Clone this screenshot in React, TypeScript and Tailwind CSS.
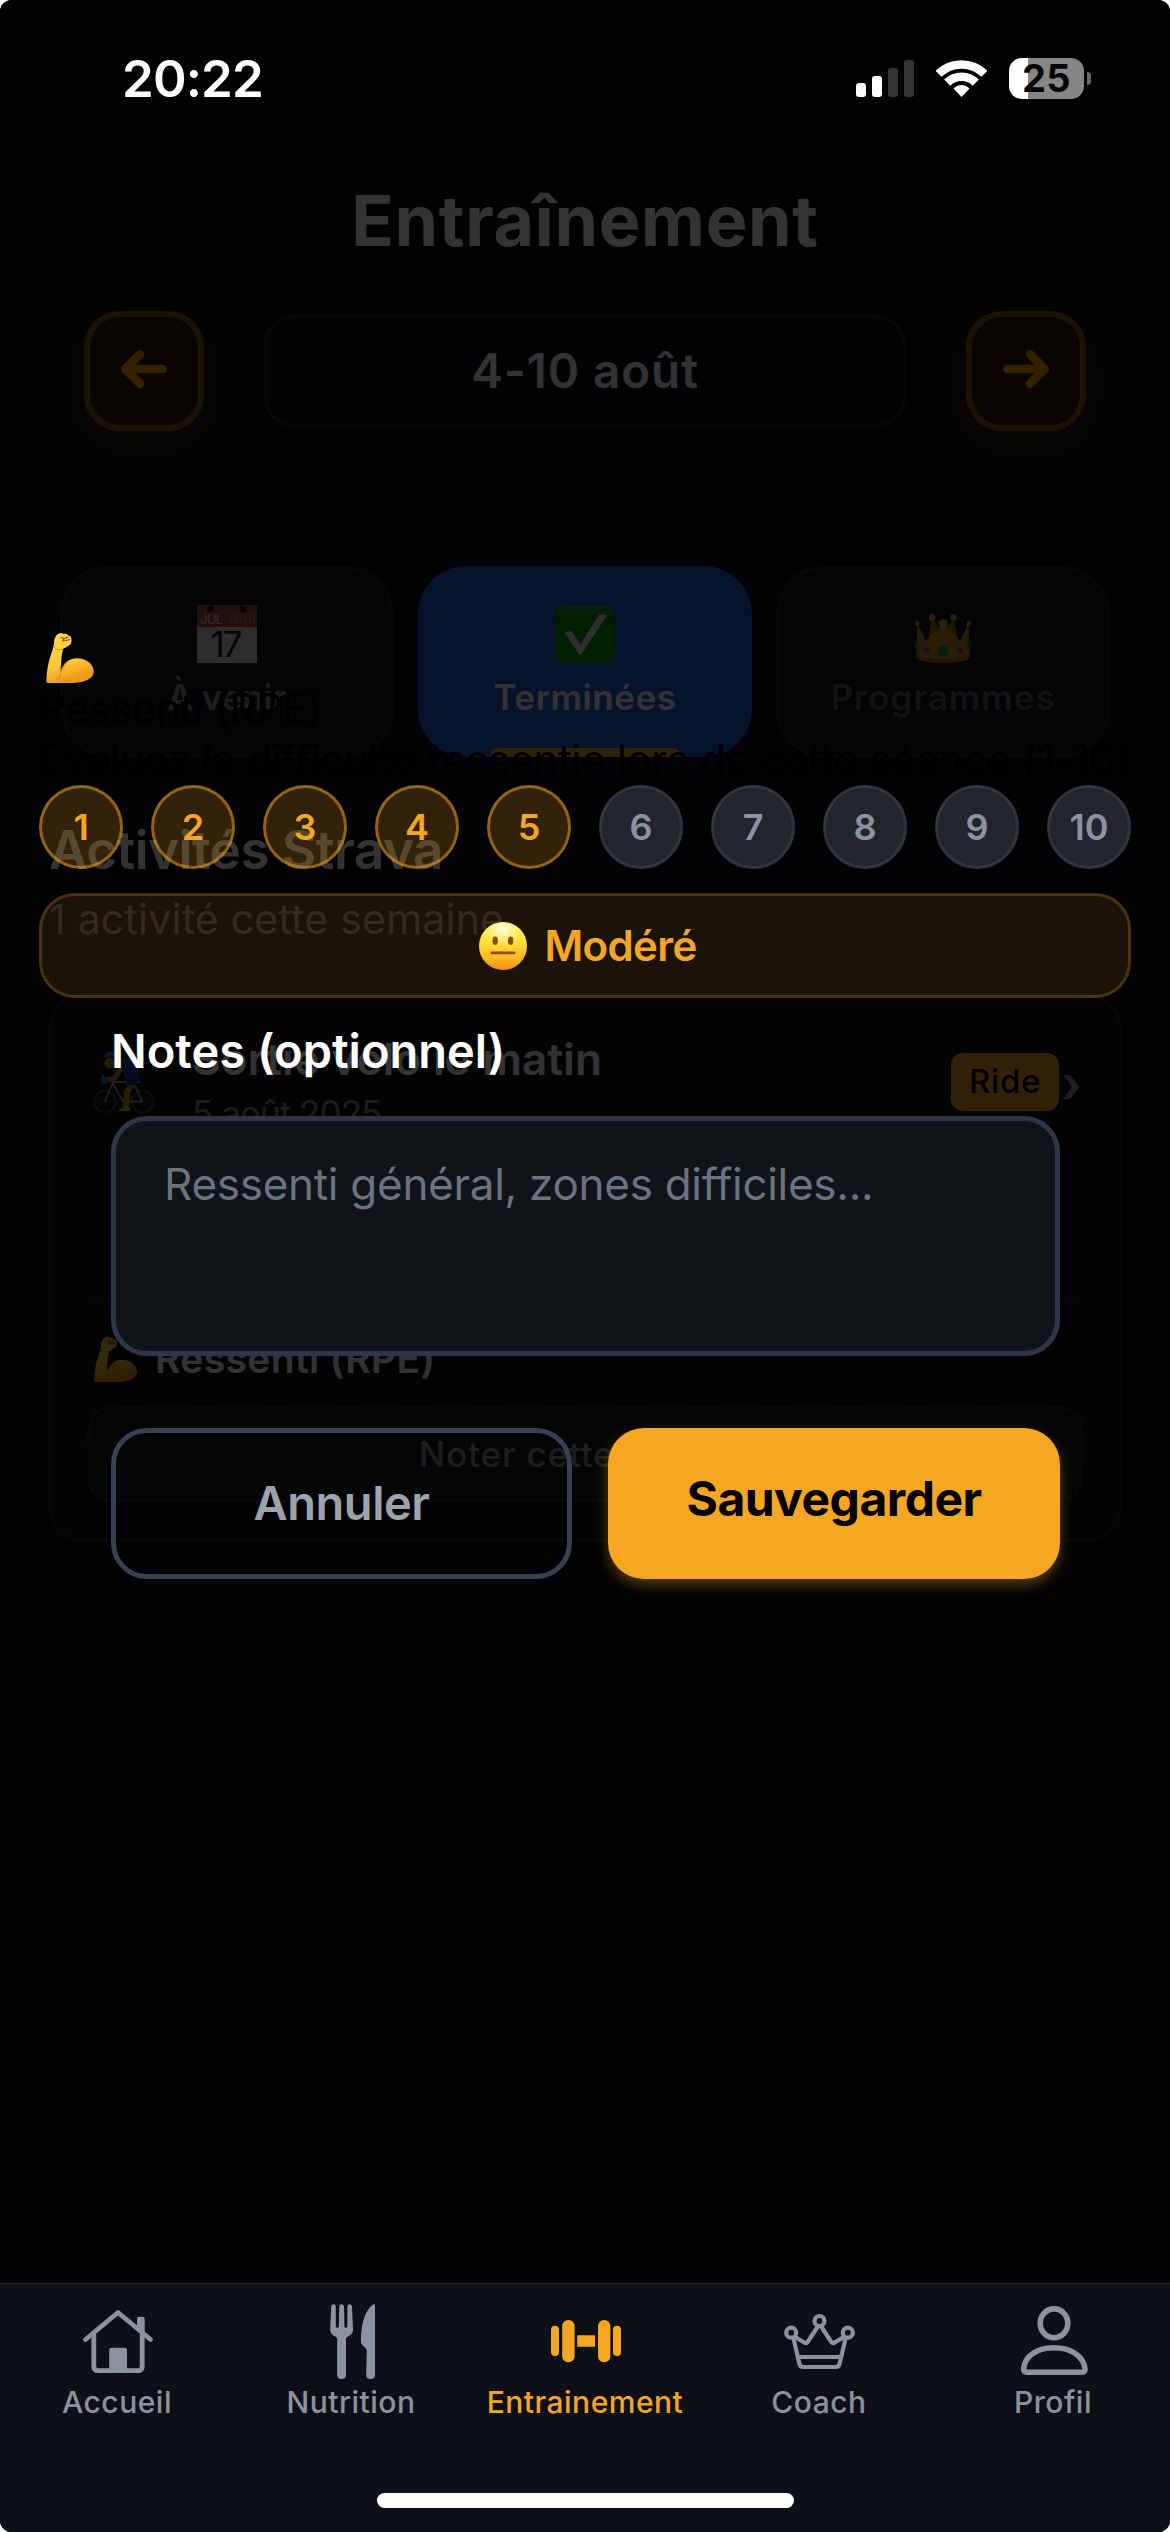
import type { ReactNode } from "react";

/* ---------- Emoji drawings ---------- */

function Biceps({ id, className }: { id: string; className: string }) {
  return (
    <svg viewBox="0 0 48 52" className={className} fill="none">
      <defs>
        <linearGradient id={id} x1="0" y1="0" x2="0.3" y2="1">
          <stop offset="0" stopColor="#ffd54e" />
          <stop offset="0.65" stopColor="#ffc938" />
          <stop offset="1" stopColor="#ee9a17" />
        </linearGradient>
      </defs>
      <path
        d="M8 12C8 6 10 3 13 1.6C14.500.6 16 .8 17 1.8L20 1.8L24.500 4.500C26 6 25.500 9 25 12C22 14 19 16 17 17L15.600 24L14.500 40L17 36C19 30 24 26.300 31 26.300C41 26.300 48 33 47.800 40C47 47.500 37 51 26 51H2C.8 51 .3 50 .4 48.500C.6 42 1.500 35 3 29C5 22 7 17 8 12Z"
        fill={`url(#${id})`}
      />
      <path d="M14.500 40C15 43 13.500 46 10.500 47.500M14.500 40C16 37 17.500 34 20 31" stroke="#e29413" strokeWidth="1.300" strokeLinecap="round" />
      <path d="M8 15C10 18 13 18.500 17 16.800" stroke="#e29413" strokeWidth="1" />
      <path d="M15 5.500L18.500 6.500L22 5M16.500 9L20 8.500L23.500 7.500M18 6.500L17 9" stroke="#8a4a0c" strokeWidth="1.100" strokeLinecap="round" />
    </svg>
  );
}

function NeutralFace() {
  return (
    <svg viewBox="0 0 48 48" className="h-12 w-12">
      <defs>
        <linearGradient id="face" x1="0" y1="0" x2="0" y2="1">
          <stop offset="0" stopColor="#fff26b" />
          <stop offset="0.45" stopColor="#fddf35" />
          <stop offset="0.8" stopColor="#fbb021" />
          <stop offset="1" stopColor="#f58a12" />
        </linearGradient>
        <radialGradient id="faceGlow" cx="0.5" cy="0.12" r="0.4">
          <stop offset="0" stopColor="#fffde0" stopOpacity="0.9" />
          <stop offset="1" stopColor="#fffde0" stopOpacity="0" />
        </radialGradient>
      </defs>
      <circle cx="24" cy="24" r="24" fill="url(#face)" />
      <circle cx="24" cy="24" r="23" fill="url(#faceGlow)" />
      <ellipse cx="16.2" cy="18.800" rx="2.700" ry="4.200" fill="#8a4b0b" />
      <ellipse cx="31.600" cy="18.800" rx="2.700" ry="4.200" fill="#8a4b0b" />
      <rect x="11.500" y="29.500" width="25" height="2.800" rx="1.200" fill="#8a4b0b" />
    </svg>
  );
}

function CalendarEmoji() {
  return (
    <svg viewBox="0 0 60 58" className="h-[58px] w-[60px]">
      <rect width="60" height="58" fill="#e2e2e2" />
      <rect width="60" height="22" fill="#b94a44" />
      <circle cx="13.500" cy="4.500" r="3.200" fill="#111" />
      <circle cx="46.500" cy="4.500" r="3.200" fill="#111" />
      <path d="M13.500 0V4M43 0L45 4" stroke="#111" strokeWidth="1.500" />
      <path d="M34 18l2-9M38.500 18l2-9M43 18l2-9M47.500 18l2-9M52 18l2-9M56 18l2-9" stroke="#d98a86" strokeWidth="1" />
      <text x="3" y="19" fontFamily="Inter, sans-serif" fontSize="13" fill="#e2e2e2" textLength="23">
        JUL
      </text>
      <text x="29.500" y="52" textAnchor="middle" fontFamily="Inter, sans-serif" fontSize="35" fill="#222" textLength="32">
        17
      </text>
    </svg>
  );
}

function CheckEmoji() {
  return (
    <svg viewBox="0 0 60 58" className="h-[58px] w-[60px]" fill="none">
      <defs>
        <linearGradient id="green" x1="0" y1="0" x2="0" y2="1">
          <stop offset="0" stopColor="#3b9a3b" />
          <stop offset="0.2" stopColor="#129012" />
          <stop offset="0.5" stopColor="#00a800" />
          <stop offset="1" stopColor="#009c00" />
        </linearGradient>
      </defs>
      <rect x=".8" y=".3" width="58.400" height="57.500" rx="9" fill="url(#green)" stroke="#087a08" strokeWidth="1" />
      <path d="M9.500 27.500L16.500 26L25.500 39.500L44 9.500H52.500L26 49.800H24.500Z" fill="#e8e8e8" />
    </svg>
  );
}

function CrownEmoji() {
  return (
    <svg viewBox="0 0 56 49" className="h-[49px] w-[56px]" fill="none">
      <path d="M13 28L17 3L27 20ZM43 28L38.500 3L29 20Z" fill="#a96a14" />
      <path d="M2.300 10L11 27C15 22 22 16 28 9.500C34 16 41 22 45 27L53.600 10L54.500 44C46 50.500 10 50.500 1.500 44Z" fill="#c9931d" />
      <path d="M1.500 40C10 46 46 46 54.500 40V44C46 50.500 10 50.500 1.500 44Z" fill="#b37a12" />
      <g fill="#d3a531">
        <ellipse cx="2.300" cy="9.500" rx="2.200" ry="2.800" />
        <ellipse cx="17.200" cy="3.500" rx="3.200" ry="3.500" />
        <circle cx="28.200" cy="9.500" r="4.600" />
        <ellipse cx="38.500" cy="3.500" rx="3.200" ry="3.500" />
        <ellipse cx="53.700" cy="9.500" rx="2.200" ry="2.800" />
      </g>
      <circle cx="28" cy="37" r="5.200" fill="#0f8f6c" />
      <circle cx="11.500" cy="36.200" r="2.900" fill="#9c2a86" />
      <circle cx="45" cy="36.200" r="2.900" fill="#9c2a86" />
      <ellipse cx="2.200" cy="32" rx="2" ry="5" fill="#0f8f6c" />
      <ellipse cx="53.800" cy="32" rx="2" ry="5" fill="#0f8f6c" />
    </svg>
  );
}

function CyclistEmoji() {
  return (
    <svg viewBox="0 0 62 62" className="h-[62px] w-[62px]" fill="none" strokeLinecap="round" strokeLinejoin="round">
      <g stroke="#4a4a4a" strokeWidth="1.600">
        <circle cx="12" cy="50.500" r="10.800" />
        <circle cx="49.500" cy="50.500" r="10.800" />
      </g>
      <path d="M12 40V61M1.500 50.500H22.500M4.500 43L19.500 58M19.500 43L4.500 58M49.500 40V61M39 50.500H60M42 43L57 58M57 43L42 58" stroke="#2c2c2c" strokeWidth=".8" />
      <path d="M12 50.500L20 31H46M20 33L31 52L41 33L49.500 50.500H31M10 25L9 30L14 31" stroke="#a8a8a8" strokeWidth="1.800" />
      <path d="M24 12L30 14L22 27L11 30" stroke="#c98f10" strokeWidth="5" />
      <path d="M39 33L34 41L33 56" stroke="#c98f10" strokeWidth="6" />
      <path d="M27 8C36 4 46 12 46.500 26C46 33 41 36 33 34C34 26 30 20 26 15Z" fill="#1b3fa0" />
      <path d="M26 58L35 55L38 58L36 60H26Z" fill="#b8c71b" />
      <circle cx="17" cy="12" r="5.500" fill="#c98f10" />
      <path d="M22 9C24 13 23 16 20 18" stroke="#3a2408" strokeWidth="3" />
      <path d="M10.500 7C12-1 22-2 25 6C20 5 15 6 10.500 7Z" fill="#1d86c4" />
      <circle cx="11.500" cy="29" r="3.500" fill="#1d86c4" />
    </svg>
  );
}

/* ---------- Tab bar icons ---------- */

const iconClass = "h-[78px] w-[100px]";

function HomeIcon() {
  return (
    <svg viewBox="0 0 100 78" className={iconClass} fill="none" stroke="currentColor" strokeWidth="4.800" strokeLinecap="round" strokeLinejoin="round">
      <path d="M18.500 37.500L51 10.500L83.500 37.500" />
      <path d="M26.800 32V64.500Q26.800 68.700 31 68.700H71Q75.200 68.700 75.200 64.500V32" />
      <path d="M70 27V17Q70 14.700 72.200 14.700H75.500Q77.700 14.700 77.700 17V33Z" fill="currentColor" stroke="none" />
      <path d="M42.200 69V48.200Q42.200 45.700 44.700 45.700H57.500Q60 45.700 60 48.200V69Z" fill="currentColor" stroke="none" />
    </svg>
  );
}

function CutleryIcon() {
  return (
    <svg viewBox="0 0 100 78" className={iconClass} fill="currentColor">
      <path d="M30.200 4.500Q30.300 2.200 32.600 2.200Q34.800 2.200 34.800 4.500V24.500Q34.900 25.800 36.300 25.800Q37.700 25.800 37.800 24.500L38.200 4.500Q38.400 2.200 40.600 2.200Q42.800 2.200 43 4.500L43.400 24.500Q43.500 25.800 44.900 25.800Q46.300 25.800 46.400 24.500V4.500Q46.500 2.200 48.700 2.200Q50.900 2.200 51 4.500L52 27C52 32 49 33.500 46.500 34.700Q45 35.500 45 37V73Q45 77 40.600 77Q36.200 77 36.200 73V37Q36.200 35.500 34.700 34.700C32 33.500 29.200 32 29.200 27Z" />
      <path d="M74 3.500V73Q74 77 69.600 77Q65.200 77 65.200 73L65.800 49Q65.800 47.500 64.500 46L60.800 42.500Q59.800 41.300 59.900 39C60 22 64 8 72 2.500Q74 1.500 74 3.500Z" />
    </svg>
  );
}

function DumbbellIcon() {
  return (
    <svg viewBox="0 0 100 78" className={iconClass} fill="currentColor">
      <rect x="16" y="23.700" width="8" height="30.300" rx="4" />
      <rect x="27.200" y="18" width="12.400" height="42.300" rx="6" />
      <rect x="42.200" y="33.300" width="17.800" height="11.500" rx=".6" />
      <rect x="63" y="18" width="12.400" height="42.300" rx="6" />
      <rect x="78" y="23.700" width="8" height="30.300" rx="4" />
    </svg>
  );
}

function CrownIcon() {
  return (
    <svg viewBox="0 0 100 78" className={iconClass} fill="none" stroke="currentColor" strokeWidth="4.200" strokeLinecap="round" strokeLinejoin="round">
      <circle cx="50.500" cy="19" r="5" />
      <circle cx="22.200" cy="30.700" r="5" />
      <circle cx="78.800" cy="30.700" r="5" />
      <path d="M24.500 36.500L30.300 61.500Q31 65 34.500 65H66.500Q70 65 70.700 61.500L76.500 36.500" />
      <path d="M27 35.500L35.800 40.800Q37.500 41.600 38.600 40L48.500 25M52.500 25L62.400 40Q63.500 41.600 65.200 40.800L74 35.500" />
      <path d="M29.500 55H71.500" strokeLinecap="butt" />
    </svg>
  );
}

function PersonIcon() {
  return (
    <svg viewBox="0 0 100 78" className={iconClass} fill="none" stroke="currentColor" strokeWidth="5.600" strokeLinejoin="round">
      <ellipse cx="51" cy="21.300" rx="13.800" ry="14.400" />
      <path d="M20.700 67C21.500 54 34 45.800 51 45.800S80.500 54 82 67Q82.200 70.200 79 70.200H23.700Q20.500 70.200 20.700 67Z" />
    </svg>
  );
}

/* ---------- Status bar ---------- */

function StatusBar() {
  return (
    <div className="flex h-[156px] items-center justify-between pr-[79px] pl-[122px]">
      <span className="text-[51px] leading-none font-semibold tracking-[-0.86px] text-white">20:22</span>
      <div className="flex items-center gap-[22px]">
        <svg viewBox="0 0 58 37" className="h-[37px] w-[58px]">
          <rect x="0" y="23" width="10" height="14" rx="3" fill="#fff" />
          <rect x="16" y="16" width="10" height="21" rx="3" fill="#fff" />
          <rect x="32" y="8" width="10" height="29" rx="3" fill="#343434" />
          <rect x="48" y="0" width="10" height="37" rx="3" fill="#343434" />
        </svg>
        <svg viewBox="0 0 51 37" className="h-[37px] w-[51px]" fill="none" stroke="#fff" strokeWidth="8.600">
          <path d="M2.600 13.800A32.700 32.700 0 0 1 48.400 13.800" />
          <path d="M11.200 22.600A20.300 20.300 0 0 1 39.800 22.600" />
          <path d="M25.500 36L18.500 28.600A10 10 0 0 1 32.500 28.600Z" fill="#fff" stroke="#fff" strokeWidth="1.500" strokeLinejoin="round" />
        </svg>
        <div className="flex items-center gap-[3px]">
          <div className="flex h-[41px] w-[75px] items-center justify-center rounded-[13px] bg-linear-to-r from-white from-[19px] to-[#868686] to-[19px] text-[38px] leading-none font-bold tracking-[0.5px] text-[#050505]">
            25
          </div>
          <div className="h-[13px] w-1 rounded-r-full bg-[#6a6a6a]" />
        </div>
      </div>
    </div>
  );
}

/* ---------- Page behind the dialog ---------- */

function ArrowButton({ flip = false }: { flip?: boolean }) {
  return (
    <div className="flex h-[120px] w-[120px] items-center justify-center rounded-[36px] border-6 border-[#8a5f1c] bg-[#2e2009] pb-[5px] shadow-[0_12px_48px_rgba(255,165,0,0.22)]">
      <svg
        viewBox="0 0 48 40"
        className={flip ? "h-10 w-12 -scale-x-100" : "h-10 w-12"}
        fill="none"
        stroke="#ffa500"
        strokeWidth="8.600"
        strokeLinecap="round"
        strokeLinejoin="round"
      >
        <path d="M20 5.300L5.300 20L20 34.700M5.300 20H42.500" />
      </svg>
    </div>
  );
}

function FilterTab({ icon, children }: { icon: ReactNode; children: ReactNode }) {
  return (
    <div className="flex flex-col items-center rounded-[48px] border-3 border-[#20242a] bg-[#12151a] pt-9">
      <div className="flex h-[58px] items-end">{icon}</div>
      {children}
    </div>
  );
}

function TrainingPage() {
  return (
    <div className="isolate bg-[#080c12] [grid-area:1/1]">
      <header className="h-[518px] border-b-3 border-[#1e1509] px-[84px] pt-[176px]">
        <h1 className="text-center text-[70px] leading-[90px] font-bold tracking-[0.7px] text-white">Entraînement</h1>
        <div className="mt-[45px] flex items-center gap-[60px]">
          <ArrowButton />
          <div className="flex h-28 flex-1 items-center justify-center rounded-[30px] border-3 border-[#362609] bg-[#0f131a] text-[47.5px] font-semibold tracking-[0.95px] text-white">
            4-10 août
          </div>
          <ArrowButton flip />
        </div>
      </header>

      <div className="mt-12 grid h-[191px] grid-cols-3 gap-6 px-[60px]">
        <FilterTab icon={<CalendarEmoji />}>
          <span className="mt-3 text-[35px] leading-[44px] font-semibold text-[#8b949e]">À venir</span>
        </FilterTab>
        <div className="relative flex flex-col items-center rounded-[48px] bg-[#1e64d6] pt-[39px] shadow-[0_12px_36px_rgba(30,101,216,0.15)]">
          <CheckEmoji />
          <span className="mt-3 text-[35px] leading-[44px] font-semibold tracking-[0.53px] text-white">Terminées</span>
          <div className="absolute bottom-0 left-[73px] h-[9px] w-[188px] rounded-t-[6px] bg-[#f5a623]" />
        </div>
        <FilterTab icon={<CrownEmoji />}>
          <span className="mt-3 text-[35px] leading-[44px] font-semibold tracking-[0.97px] text-[#5b6067]">Programmes</span>
        </FilterTab>
      </div>

      <section className="mt-[61px] px-12">
        <h2 className="pl-px text-[53px] leading-[64px] font-semibold tracking-[-0.54px] text-white">Activités Strava</h2>
        <p className="mt-3 pl-px text-[41px] leading-[50px] tracking-[0.21px] text-[#8b949e]">1 activité cette semaine</p>

        <article className="mt-[49px] h-[549px] rounded-[36px] border-3 border-[#1c2025] bg-[#101318] px-9 pt-9">
          <div className="flex h-[108px] items-start">
            <div className="flex h-[100px] w-[105px] items-center pl-[6px]">
              <CyclistEmoji />
            </div>
            <div className="flex-1">
              <div className="text-[44px] leading-[54px] font-semibold tracking-[0.22px] text-white">Sortie vélo le matin</div>
              <div className="text-[35px] leading-[54px] tracking-[-0.95px] text-[#8b949e]">5 août 2025</div>
            </div>
            <div className="flex h-[100px] items-center">
              <span className="flex h-[58px] w-[108px] items-center justify-center rounded-[12px] bg-[#f5a623] text-[33px] font-medium tracking-[0.6px] text-black">
                Ride
              </span>
              <svg viewBox="0 0 24 24" className="mt-[10px] h-6 w-6" fill="#9a9a9a">
                <path d="M4.500 0H11L20.500 12L11 24H4.500L13 12Z" />
              </svg>
            </div>
          </div>

          <div className="mt-[157px] border-t-3 border-[#181b20] pt-[33px]">
            <div className="flex h-[52px] items-center pl-[6px]">
              <Biceps id="armCard" className="h-[47px] w-[45px]" />
              <span className="pl-[17px] text-[39px] leading-[52px] font-semibold tracking-[0.36px] text-white">Ressenti (RPE)</span>
            </div>
            <div className="mt-[21px] flex h-24 items-center justify-center rounded-[24px] border-3 border-dashed border-[#2a2e34] bg-[#17191d] text-[35px] font-medium tracking-[0.84px] text-[#8b949e]">
              Noter cette séance
            </div>
          </div>
        </article>
      </section>
    </div>
  );
}

/* ---------- Rating dialog ---------- */

const selectedRating = 5;

function RatingDialog() {
  return (
    <div className="z-10 bg-black/80 px-[39px] pt-[632px] [grid-area:1/1]">
      <div className="h-[51px] pl-[7px]">
        <Biceps id="armTitle" className="h-[52px] w-12" />
      </div>
      <p className="text-[42px] leading-[51px] tracking-[-0.51px] text-black">Ressenti (RPE)</p>
      <p className="text-[42px] leading-[51px] tracking-[-0.38px] whitespace-nowrap text-black">
        Évaluez la difficulté ressentie lors de cette séance (1-10)
      </p>

      <div className="flex justify-between">
        {[1, 2, 3, 4, 5, 6, 7, 8, 9, 10].map((n) => (
          <div
            key={n}
            className={
              n <= selectedRating
                ? "flex h-[84px] w-[84px] items-center justify-center rounded-full border-3 border-[#f5a623]/50 bg-[#f5a623]/20 text-[36px] font-semibold text-[#f5a623]"
                : "flex h-[84px] w-[84px] items-center justify-center rounded-full border-3 border-[#30363d] bg-[#21262d] text-[36px] font-semibold text-[#8b949e]"
            }
          >
            {n}
          </div>
        ))}
      </div>

      <div className="mt-6 flex h-[105px] items-center justify-center gap-[17px] rounded-[36px] border-3 border-[#f5a623]/22 bg-[#f5a623]/11 pl-[6px]">
        <NeutralFace />
        <span className="text-[42px] leading-none font-semibold tracking-[-0.62px] text-[#f5a623]">Modéré</span>
      </div>

      <div className="mr-[71px] ml-[72px]">
        <div className="mt-[25px] text-[47px] leading-[56px] font-semibold text-white">Notes (optionnel)</div>
        <div className="mt-[37px] h-60 rounded-[36px] border-5 border-[#2d3748] bg-[#0f1419] pt-[37px] pl-[48px] text-[44px] leading-[53px] tracking-[-0.28px] text-[#6b7280]">
          Ressenti général, zones difficiles...
        </div>
        <div className="mt-[72px] flex h-[151px] gap-9">
          <div className="flex w-[461px] items-center justify-center rounded-[36px] border-5 border-[#374151] text-[47px] font-semibold tracking-[-0.43px] text-[#9ca3af]">
            Annuler
          </div>
          <div className="flex flex-1 items-center justify-center rounded-[36px] bg-[#f5a623] pb-[10px] text-[48px] font-bold tracking-[-0.51px] text-black shadow-[0_6px_14px_rgba(245,166,35,0.35)]">
            Sauvegarder
          </div>
        </div>
      </div>
    </div>
  );
}

/* ---------- Bottom navigation ---------- */

function NavItem({ icon, children, active = false }: { icon: ReactNode; children: ReactNode; active?: boolean }) {
  return (
    <div className={active ? "flex flex-1 flex-col items-center text-[#f5a623]" : "flex flex-1 flex-col items-center text-[#8b949e]"}>
      {icon}
      <span className="mt-1 text-[30px] leading-9 font-medium tracking-[0.5px]">{children}</span>
    </div>
  );
}

function BottomNav() {
  return (
    <nav className="flex h-[249px] flex-col items-center justify-between border-t border-[#21262d] bg-[#0d1117] pt-[18px] pb-6">
      <div className="flex w-full">
        <NavItem icon={<HomeIcon />}>Accueil</NavItem>
        <NavItem icon={<CutleryIcon />}>Nutrition</NavItem>
        <NavItem icon={<DumbbellIcon />} active>
          Entrainement
        </NavItem>
        <NavItem icon={<CrownIcon />}>Coach</NavItem>
        <NavItem icon={<PersonIcon />}>Profil</NavItem>
      </div>
      <div className="h-[15px] w-[417px] rounded-full bg-white" />
    </nav>
  );
}

export default function App() {
  return (
    <div className="bg-white">
      <div className="grid h-[2532px] w-[1170px] overflow-hidden rounded-[12px] bg-black font-['Inter','Liberation_Sans',sans-serif]">
        <TrainingPage />
        <RatingDialog />
        <div className="z-20 flex flex-col justify-between [grid-area:1/1]">
          <StatusBar />
          <BottomNav />
        </div>
      </div>
    </div>
  );
}
